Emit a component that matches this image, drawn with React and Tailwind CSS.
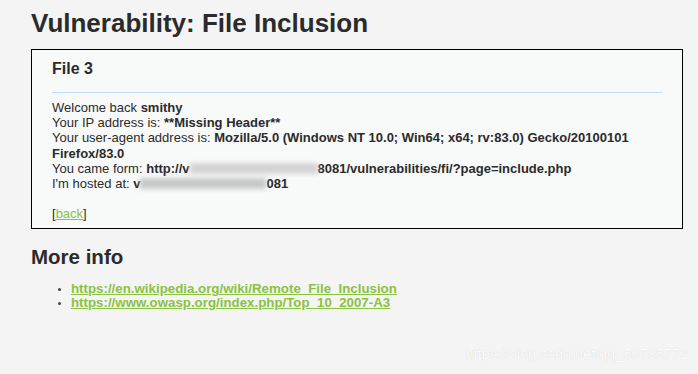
// DVWA — File Inclusion, file 3

function Blur({ w, tone = 'bg-[#c8c8c8]' }) {
  return (
    <span
      className={`inline-block h-[11px] align-[-1px] blur-[2px] ${tone}`}
      style={{ width: w }}
    />
  )
}

export default function App() {
  return (
    <div className="min-h-[374px] bg-[#f4f4f4] pl-[31px] pr-[15px] pt-[7px] font-['Liberation_Sans',Arial,sans-serif] text-[#2b2b2b]">
      <h1 className="text-[26px] font-bold leading-[32px]">Vulnerability: File Inclusion</h1>

      <div className="mt-[10px] border border-black bg-[#f8f9f9] px-[20px] pt-[8px] pb-[7px] text-[13px] leading-[15.2px]">
        <h3 className="text-[16px] font-bold leading-[22px]">File 3</h3>
        <hr className="mt-[12px] mb-[7px] border-t border-[#c3d9ff]" />
        <p>
          Welcome back <b>smithy</b>
          <br />Your IP address is: <b>**Missing Header**</b>
          <br />Your user-agent address is: <b>Mozilla/5.0 (Windows NT 10.0; Win64; x64; rv:83.0) Gecko/20100101 Firefox/83.0</b>
          <br />You came form: <b>http://v<Blur w={128} tone="bg-[#d4d4d4]" />8081/vulnerabilities/fi/?page=include.php</b>
          <br />I'm hosted at: <b>v<Blur w={126} />081</b>
        </p>
        <p className="mt-[15px]">
          [<a className="text-[#8ac33d] underline">back</a>]
        </p>
      </div>

      <h2 className="mt-[15px] text-[20.5px] font-bold leading-[26px]">More info</h2>
      <ul className="mt-[12px] list-disc pl-[40px] text-[13.3px] leading-[14px] font-bold text-[#8ac33d] marker:text-[#444] marker:text-[10px]">
        <li><a className="underline">https://en.wikipedia.org/wiki/Remote_File_Inclusion</a></li>
        <li><a className="underline">https://www.owasp.org/index.php/Top_10_2007-A3</a></li>
      </ul>

      <div className="flex justify-end pt-[34px]">
        <span className="mr-[-5px] text-[14.5px] text-[#fbfbfb] [text-shadow:0_0_1px_#cfcfcf]">https://blog.csdn.net/qq_50785772</span>
      </div>
    </div>
  )
}
